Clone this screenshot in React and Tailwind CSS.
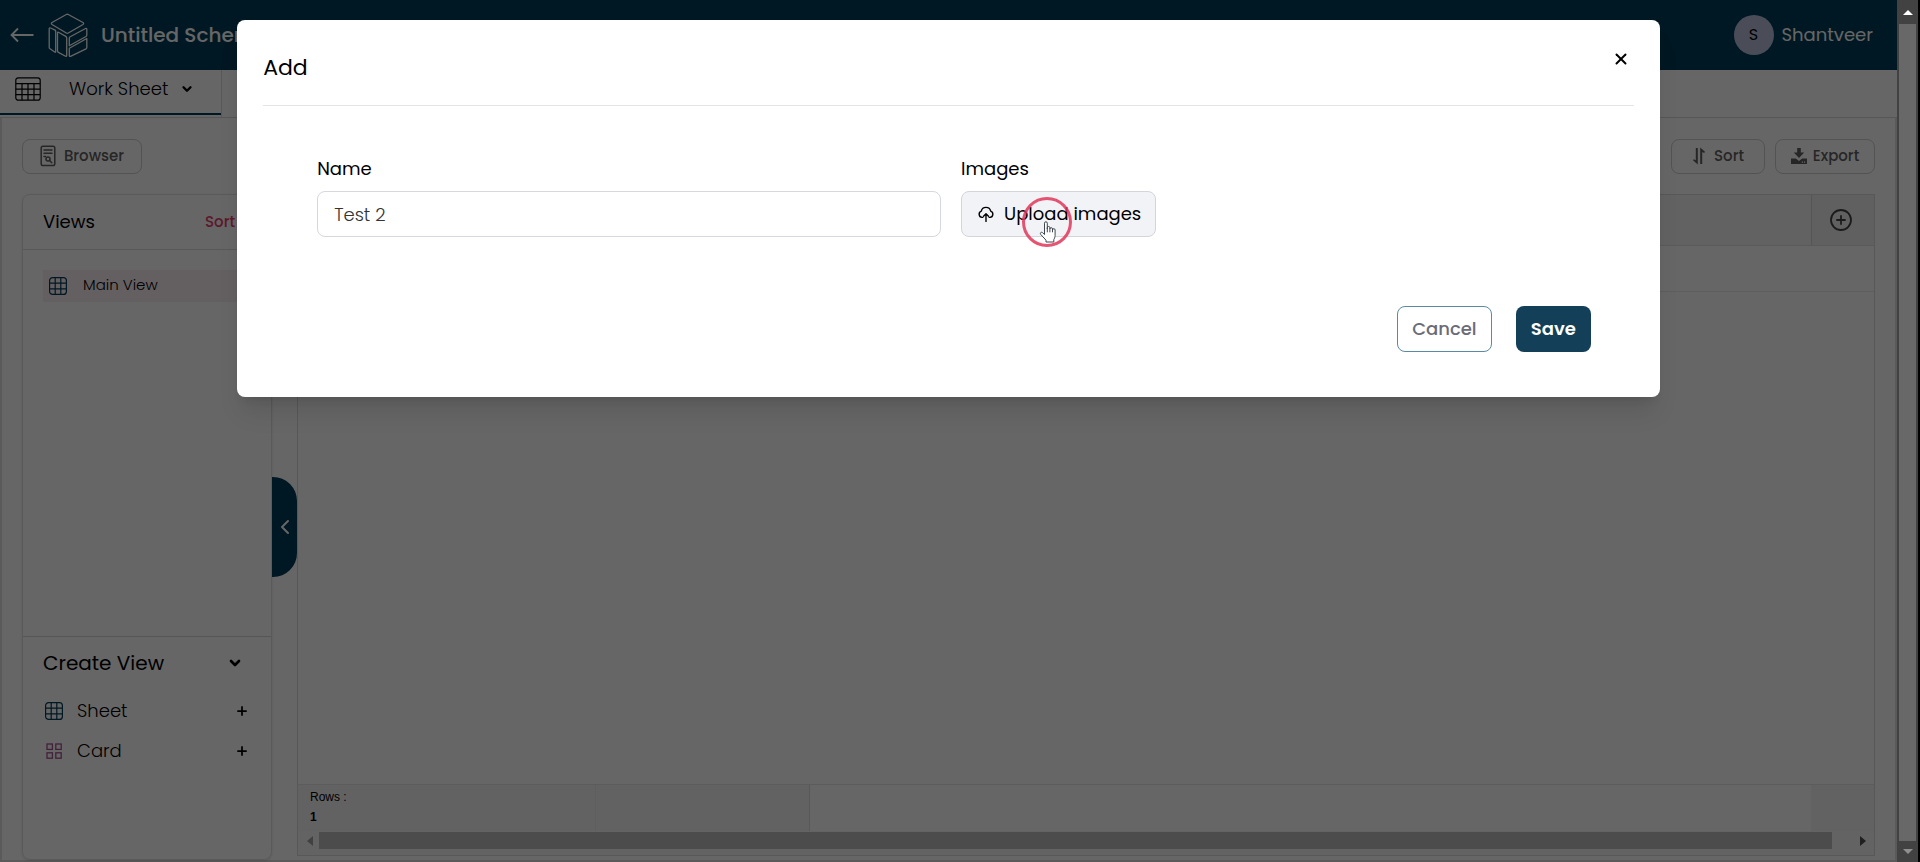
import { ChevronDown, ChevronLeft, Plus, X, CirclePlus } from "lucide-react";

function GridIcon({ className }) {
  return (
    <svg viewBox="0 0 18 18" className={className} fill="none" stroke="currentColor" strokeWidth="1.2">
      <rect x="0.6" y="0.6" width="16.8" height="16.8" rx="3" />
      <path d="M6.2 0.6v16.8M11.8 0.6v16.8M0.6 6.2h16.8M0.6 11.8h16.8" />
    </svg>
  );
}

function CardIcon({ className }) {
  return (
    <svg viewBox="0 0 18 18" className={className} fill="none" stroke="currentColor" strokeWidth="1.3">
      <rect x="2" y="2" width="5.4" height="5.4" />
      <rect x="10.8" y="2" width="5.4" height="5.4" />
      <rect x="2" y="10.8" width="5.4" height="5.4" />
      <rect x="10.8" y="10.8" width="5.4" height="5.4" />
    </svg>
  );
}

function TableIcon({ className }) {
  return (
    <svg viewBox="0 0 26 24" className={className} fill="none" stroke="currentColor" strokeWidth="1.2">
      <rect x="0.8" y="0.8" width="24.4" height="22.4" rx="2.5" />
      <path d="M0.8 6.6h24.4M0.8 12.2h24.4M0.8 17.7h24.4M7 6.6v16.6M13 6.6v16.6M19 6.6v16.6" />
    </svg>
  );
}

function LogoIcon({ className }) {
  return (
    <svg viewBox="0 0 40 45" className={className} fill="none" stroke="currentColor" strokeWidth="1.3" strokeLinejoin="round" strokeLinecap="round">
      <path d="M18.300 1.500Q19.300 1 20.300 1.500L35 9.500Q36.300 10.500 35 11.500L20.300 20Q19.300 20.600 18.300 20L4 11.500Q2.700 10.500 4 9.500Z" />
      <path d="M1.200 16Q1.200 14.500 2.500 15L6.700 16.800Q7.700 17.300 7.700 18.300V38.600Q7.700 39.700 6.700 39L2 35.800Q1.200 35.300 1.200 34.300Z" />
      <path d="M9.500 20Q9.500 18.800 10.500 19.300L17.800 23.400Q18.700 24 18.700 25V42.500Q18.700 43.800 17.600 43.200L10.400 39.400Q9.500 39 9.500 38Z" />
      <path d="M21.300 25.200Q21.300 24.300 22.200 23.800L37.500 15.500Q38.800 15 38.800 16.300V22Q38.800 23 38 23.500L21.300 32.700Z" />
      <path d="M21.300 35.300 38.800 25.500V34.500Q38.800 35.400 38 35.900L22.500 43.300Q21.300 43.800 21.300 42.500Z" />
    </svg>
  );
}

function BrowserIcon({ className }) {
  return (
    <svg viewBox="0 0 16 22" className={className} fill="none" stroke="currentColor" strokeWidth="1.5" strokeLinecap="round">
      <rect x="1.200" y="1.200" width="13.600" height="19.300" rx="1.800" />
      <path d="M4 5h8M4 8.300h8M4 11.500h1.500" />
      <circle cx="8" cy="14" r="2" />
      <path d="m9.600 15.600 2.200 2.200" />
    </svg>
  );
}

function BackIcon({ className }) {
  return (
    <svg viewBox="0 0 24 16" className={className} fill="none" stroke="currentColor" strokeWidth="1.800">
      <path d="M23.500 8H2M8 1.500 1.500 8 8 14.500" />
    </svg>
  );
}

function SortIcon({ className }) {
  return (
    <svg viewBox="0 0 14 18" className={className} fill="currentColor">
      <path d="M3.800 1h2v16.500L1 13.200l.8-1 2 1ZM10.200 17h-2V.5L13 4.800l-.8 1.200-2-1Z" />
    </svg>
  );
}

function ExportIcon({ className }) {
  return (
    <svg viewBox="0 0 16 16" className={className} fill="currentColor">
      <path d="M6.200 0h3.600v4.600h3.400L8 10 2.800 4.600h3.400Z" />
      <path d="M0 10.500h4.800L8 13l3.200-2.500H16V16H0Zm10.800 3v1.200h1.200v-1.200Zm2.200 0v1.200h1.200v-1.200Z" fillRule="evenodd" />
    </svg>
  );
}

function UploadIcon({ className }) {
  return (
    <svg viewBox="0 0 16 16" className={className} fill="none" stroke="currentColor" strokeWidth="1.400" strokeLinecap="round" strokeLinejoin="round">
      <path d="M4.800 11.400H4A3.200 3.200 0 0 1 3.300 5.200 4.800 4.800 0 0 1 12.700 5.200 3.200 3.200 0 0 1 12 11.400h-.8" />
      <path d="M8 15.500V8M5.500 10.200 8 7.700l2.500 2.500" />
    </svg>
  );
}

function HandCursor({ className }) {
  return (
    <svg viewBox="0 0 17 22" className={className} fill="#ffffff" stroke="#3f4652" strokeWidth="1" strokeLinejoin="round">
      <path d="M5 13.500V2.200a1.400 1.400 0 0 1 2.800 0V8V6.800a1.300 1.300 0 0 1 2.600 0V8a1.300 1.300 0 0 1 2.600 0v1a1.300 1.300 0 0 1 2.600 0v5.500c0 2-.8 3-1.300 4.200V21H6.500v-1.800L1.200 13.400C.2 12 1.700 10.600 3 11.600Z" />
      <path d="M7.800 7.500v3.800M10.400 8v3.300M13 9v2.300" fill="none" />
    </svg>
  );
}

function ToolButton({ icon, children, className }) {
  return (
    <button type="button" className={`flex h-[35px] items-center justify-center rounded-lg border border-[#d0d0d0] text-[15px] font-medium text-[#5f5f5f] ${className}`}>
      {icon}
      {children}
    </button>
  );
}

function AppHeader() {
  return (
    <header className="flex h-[70px] shrink-0 items-center bg-[#003c58] pl-2.5 pr-6">
      <button type="button" aria-label="Back" className="text-white">
        <BackIcon className="h-4 w-6" />
      </button>
      <LogoIcon className="ml-3.5 h-[45px] w-10 text-white" />
      <h1 className="ml-[13px] text-xl font-medium text-white">Untitled Schema</h1>
      <div className="ml-auto flex items-center gap-2">
        <span className="flex size-10 items-center justify-center rounded-full bg-[#b8c0dc] text-base text-black">S</span>
        <span className="text-lg text-white">Shantveer</span>
      </div>
    </header>
  );
}

function TabBar() {
  return (
    <nav className="flex h-12 shrink-0 border-b border-[#d2d6da]">
      <div className="flex w-[222px] border-r border-[#dadfe4]">
        <button type="button" className="flex h-[45px] w-full items-center border-b-2 border-[#003c58] pb-1.5 pl-[15px] text-lg font-light text-black">
          <TableIcon className="h-6 w-[26px]" />
          <span className="ml-7">Work Sheet</span>
          <ChevronDown className="ml-3 size-3.5" strokeWidth={4} />
        </button>
      </div>
    </nav>
  );
}

function ViewsPanel() {
  return (
    <aside className="flex w-[250px] shrink-0 flex-col rounded-lg border border-[#e2e2e2] shadow-sm">
      <div className="flex h-[55px] items-center justify-between border-b border-[#dcdcdc] px-5">
        <h2 className="text-lg">Views</h2>
        <button type="button" className="mr-4 text-[15px] font-medium text-[#e83e6b]">Sort</button>
      </div>
      <div className="flex-1 px-5 pt-5">
        <button type="button" className="flex h-8 w-full items-center gap-4 bg-[#fbeef0] pl-1.5 text-[15px] font-light">
          <GridIcon className="size-[18px] text-[#003c58]" />
          <span className="pb-0.5">Main View</span>
        </button>
      </div>
      <div className="h-[223px] border-t border-[#d6d6d6] px-5 pt-2.5">
        <div className="flex items-center justify-between pr-2">
          <h2 className="text-xl leading-8">Create View</h2>
          <ChevronDown className="size-4" strokeWidth={4} />
        </div>
        <ul className="mt-3 text-lg font-light">
          <li className="flex h-10 items-center gap-3.5 pl-0.5">
            <GridIcon className="size-[18px] text-[#003c58]" />
            Sheet
            <button type="button" aria-label="Add sheet" className="ml-auto pr-0.5">
              <Plus className="size-3.5" strokeWidth={3} />
            </button>
          </li>
          <li className="flex h-10 items-center gap-3.5 pl-0.5">
            <CardIcon className="size-[18px] text-[#a9518f]" />
            Card
            <button type="button" aria-label="Add card" className="ml-auto pr-0.5">
              <Plus className="size-3.5" strokeWidth={3} />
            </button>
          </li>
        </ul>
      </div>
    </aside>
  );
}

function Sheet() {
  return (
    <section className="mb-1 flex min-w-0 flex-1 flex-col border border-[#dddddd]">
      <div className="flex h-[51px] border-b border-[#e2e2e2] bg-[#f5f5f5]">
        <div className="flex-1" />
        <button type="button" aria-label="Add column" className="flex w-[63px] items-center justify-center border-l border-[#d4d4d4] bg-[#f0f0f0] pr-1 text-[#444444]">
          <CirclePlus className="size-6" strokeWidth={1.8} />
        </button>
      </div>
      <div className="h-[46px] border-b border-[#eaeaea]" />
      <div className="flex-1" />
      <div className="flex h-[47px] border-t border-[#e6e6e6] font-['Liberation_Sans',sans-serif] text-xs">
        <div className="w-[298px] border-r border-[#ececec] bg-[#f5f5f5] pl-3 pt-0.5">
          <p className="leading-5">Rows :</p>
          <p className="leading-5 font-bold">1</p>
        </div>
        <div className="w-[214px] border-r border-[#dddddd] bg-[#f5f5f5]" />
        <div className="flex-1" />
        <div className="w-[63px] bg-[#f4f4f4]" />
      </div>
      <div className="flex h-6 items-start bg-[#f8f8f8] pt-px">
        <svg viewBox="0 0 6 10" className="ml-[9px] mr-1.5 mt-1 h-2.5 w-1.5" fill="#a3a3a3"><path d="M6 0v10L0 5Z" /></svg>
        <div className="h-[17px] flex-1 bg-[#bdbdbd]" />
        <svg viewBox="0 0 6 10" className="ml-7 mr-2 mt-1 h-2.5 w-1.5" fill="#505050"><path d="M0 0v10l6-5Z" /></svg>
      </div>
    </section>
  );
}

function AddDialog() {
  return (
    <div className="absolute inset-0 flex items-start justify-center bg-black/60 pt-5">
      <div role="dialog" aria-modal="true" aria-labelledby="dialog-title" className="flex h-[377px] w-3/4 flex-col rounded-lg bg-white px-[26px] shadow-xl">
        <div className="flex h-[86px] shrink-0 items-start justify-between border-b border-[#e2e4e8] pr-1">
          <h2 id="dialog-title" className="pt-8 text-[22px] leading-8">Add</h2>
          <button type="button" aria-label="Close" className="mt-[30px]">
            <X className="size-[18px]" strokeWidth={2.6} />
          </button>
        </div>
        <form className="flex flex-1 flex-col pl-[54px] pr-[43px] pt-[51px] text-lg">
          <div className="flex gap-5 pr-1.5">
            <div className="flex flex-1 flex-col gap-2.5">
              <label htmlFor="name" className="leading-6">Name</label>
              <input id="name" defaultValue="Test 2" className="h-[46px] rounded-lg border border-[#d5d8e0] px-4 font-light text-[#333333]" />
            </div>
            <div className="flex flex-1 flex-col items-start gap-2.5">
              <span className="leading-6">Images</span>
              <div className="relative">
                <button type="button" className="flex h-[46px] items-center gap-2.5 rounded-lg border border-[#d3d5db] bg-[#f2f3f6] pl-4 pr-3.5">
                  <UploadIcon className="size-4" />
                  Upload images
                </button>
                <span className="absolute left-[61px] top-1.5 size-[50px] rounded-full border-[3px] border-[#e2365a]/85" />
                <HandCursor className="absolute left-[78px] top-[30px] h-[22px] w-[18px]" />
              </div>
            </div>
          </div>
          <div className="mt-[69px] flex justify-end gap-6">
            <button type="button" className="h-[46px] w-[95px] rounded-lg border border-[#5d8aa3] font-medium text-[#6b6b76]">Cancel</button>
            <button type="submit" className="h-[46px] w-[75px] rounded-lg bg-[#133f58] font-semibold text-white">Save</button>
          </div>
        </form>
      </div>
    </div>
  );
}

function PageScrollbar() {
  return (
    <div className="flex w-[23px] shrink-0 flex-col border-r-2 border-black bg-[#424242]">
      <div className="flex h-6 items-center justify-center">
        <svg viewBox="0 0 10 5" className="h-[5px] w-2.5" fill="#ffffff"><path d="M0 5h10L5 0Z" /></svg>
      </div>
      <div className="ml-0.5 mr-0.5 flex-1 bg-[#686868]" />
      <div className="flex h-[21px] items-center justify-center">
        <svg viewBox="0 0 10 5" className="h-[5px] w-2.5" fill="#8f8f8f"><path d="M0 0h10L5 5Z" /></svg>
      </div>
    </div>
  );
}

export default function App() {
  return (
    <div className="flex h-screen overflow-hidden bg-white font-['Poppins','Inter',sans-serif] text-black">
      <div className="relative flex min-w-0 flex-1 flex-col">
        <AppHeader />
        <TabBar />
        <main className="flex min-h-0 flex-1 flex-col border-x-2 border-b-2 border-[#e0e0e0] px-5">
          <div className="flex h-[76px] items-center gap-2.5">
            <ToolButton icon={<BrowserIcon className="mr-2 h-[22px] w-4" />} className="w-[120px]">Browser</ToolButton>
            <ToolButton icon={<SortIcon className="mr-2 h-[18px] w-3.5" />} className="ml-auto w-[94px]">Sort</ToolButton>
            <ToolButton icon={<ExportIcon className="mr-1.5 size-4" />} className="w-[100px]">Export</ToolButton>
          </div>
          <div className="flex min-h-0 flex-1">
            <ViewsPanel />
            <button type="button" aria-label="Collapse views" className="mt-[283px] flex h-[100px] w-[25px] shrink-0 items-center justify-center rounded-r-3xl bg-[#003c58] text-white">
              <ChevronLeft className="size-6" />
            </button>
            <Sheet />
          </div>
        </main>
        <AddDialog />
      </div>
      <PageScrollbar />
    </div>
  );
}
